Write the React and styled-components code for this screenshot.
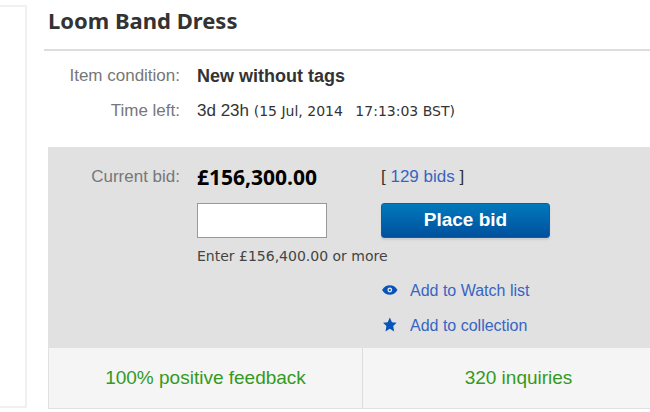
import React from "react";
import styled, { createGlobalStyle } from "styled-components";

const GlobalStyle = createGlobalStyle`
  * { box-sizing: border-box; }
  body {
    margin: 0;
    background: #fff;
    color: #333;
    font-family: "Liberation Sans", Arial, sans-serif;
    font-size: 17px;
    line-height: 20px;
  }
`;

const Page = styled.div`
  display: flex;
  align-items: stretch;
  padding-top: 5px;
`;

const GalleryEdge = styled.aside`
  flex: 0 0 27px;
  margin-bottom: 1px;
  border: 2px solid #f0f0f0;
  border-left: 0;
`;

const Listing = styled.main`
  flex: 1;
  min-width: 0;
  padding-left: 17px;
`;

const Title = styled.h1`
  margin: 0;
  padding: 0 0 13px 4px;
  border-bottom: 2px solid #ddd;
  color: #333;
  font: 700 22px/31px "Noto Sans", "Trebuchet MS", sans-serif;
`;

const Details = styled.dl`
  display: grid;
  grid-template-columns: 136px 1fr;
  column-gap: 17px;
  row-gap: 15px;
  margin: 0;
  padding: 15px 0 26px;
`;

const Label = styled.dt`
  color: #777;
  text-align: right;
`;

const Value = styled.dd`
  margin: 0;
  font-size: ${({ $strong }) => ($strong ? 18 : 17)}px;
  font-weight: ${({ $strong }) => ($strong ? 700 : 400)};
  white-space: nowrap;
`;

const Small = styled.span`
  font-family: "DejaVu Sans", Verdana, sans-serif;
  font-size: 14px;
`;

const Time = styled.span`
  margin-left: 8px;
`;

const Panel = styled.section`
  margin-left: 4px;
  border: 1px solid #e1e1e1;
  border-right: 0;
  background: #f5f5f5;
`;

const BidArea = styled.form`
  display: grid;
  grid-template-columns: 131px 167px 1fr;
  column-gap: 17px;
  padding: 18px 0 12px;
  background: #e1e1e1;
`;

const BidLabel = styled.label`
  color: #777;
  line-height: 22px;
  text-align: right;
`;

const BidColumn = styled.div`
  min-width: 0;
`;

const Price = styled.div`
  color: #000;
  font: 700 21px/22px "Open Sans", "Trebuchet MS", sans-serif;
`;

const BidInput = styled.input`
  display: block;
  width: 130px;
  height: 35px;
  margin: 15px 0 8px;
  padding: 0 8px;
  border: 1px solid #999;
  border-radius: 0;
  background: #fff;
  font: inherit;
`;

const Hint = styled.div`
  color: #444;
  font-family: "DejaVu Sans", Verdana, sans-serif;
  font-size: 14px;
  white-space: nowrap;
`;

const BidCount = styled.div`
  line-height: 22px;
`;

const Link = styled.a`
  color: #3665c3;
  text-decoration: none;
`;

const BidButton = styled.button`
  display: block;
  width: 169px;
  height: 35px;
  margin: 15px 0 43px;
  padding: 0 0 2px;
  border: 1px solid #0064ad;
  border-radius: 3px;
  background: linear-gradient(#0079bc, #00509d);
  box-shadow: 0 2px 2px #ccc;
  color: #fff;
  font: 700 19px/22px "Liberation Sans", Arial, sans-serif;
  cursor: pointer;
`;

const Actions = styled.nav`
  display: grid;
  row-gap: 15px;
`;

const ActionLink = styled(Link)`
  display: flex;
  align-items: center;
  gap: 12px;
  font-size: 16px;
`;

const Icon = styled.svg`
  width: 17px;
  height: 17px;
  margin-top: -4px;
  fill: #0654ba;
`;

const Facts = styled.div`
  display: grid;
  grid-template-columns: 313px 1fr;
`;

const Fact = styled.div`
  padding: 19px 0 19px ${({ $divided }) => ($divided ? 24 : 0)}px;
  border-left: ${({ $divided }) => ($divided ? "1px solid #ddd" : "0")};
  color: #339a22;
  font-size: 19px;
  line-height: 22px;
  text-align: center;
`;

const EyeIcon = () => (
  <Icon viewBox="0 0 16 16" aria-hidden="true">
    <path
      fillRule="evenodd"
      d="M1 8.500C3 5 5.500 4 8.300 4s5.300 1 7.200 4.500c-1.900 3.500-4.400 4.500-7.200 4.500S3 12 1 8.500zM8.300 6.200a2.300 2.300 0 1 0 0 4.600 2.300 2.300 0 0 0 0-4.600z"
    />
    <circle cx="8.300" cy="8.500" r="1" />
  </Icon>
);

const StarIcon = () => (
  <Icon viewBox="0 0 16 16" aria-hidden="true">
    <path d="M8.300 1.500l2 4.300 4.400.5-3.200 3.200.9 5.100-4.100-2.500-4.100 2.500.9-5.100L1.900 6.300l4.400-.5z" />
  </Icon>
);

export default function App() {
  return (
    <>
      <GlobalStyle />
      <Page>
        <GalleryEdge />
        <Listing>
          <Title>Loom Band Dress</Title>
          <Details>
            <Label>Item condition:</Label>
            <Value $strong>New without tags</Value>
            <Label>Time left:</Label>
            <Value>
              3d 23h{" "}
              <Small>
                (15 Jul, 2014 <Time>17:13:03 BST)</Time>
              </Small>
            </Value>
          </Details>
          <Panel>
            <BidArea onSubmit={(event) => event.preventDefault()}>
              <BidLabel htmlFor="bid">Current bid:</BidLabel>
              <BidColumn>
                <Price>£156,300.00</Price>
                <BidInput id="bid" type="text" aria-describedby="bid-hint" />
                <Hint id="bid-hint">Enter £156,400.00 or more</Hint>
              </BidColumn>
              <BidColumn>
                <BidCount>
                  [ <Link href="#bids">129 bids</Link> ]
                </BidCount>
                <BidButton type="submit">Place bid</BidButton>
                <Actions>
                  <ActionLink href="#watch">
                    <EyeIcon />
                    Add to Watch list
                  </ActionLink>
                  <ActionLink href="#collection">
                    <StarIcon />
                    Add to collection
                  </ActionLink>
                </Actions>
              </BidColumn>
            </BidArea>
            <Facts>
              <Fact>100% positive feedback</Fact>
              <Fact $divided>320 inquiries</Fact>
            </Facts>
          </Panel>
        </Listing>
      </Page>
    </>
  );
}
